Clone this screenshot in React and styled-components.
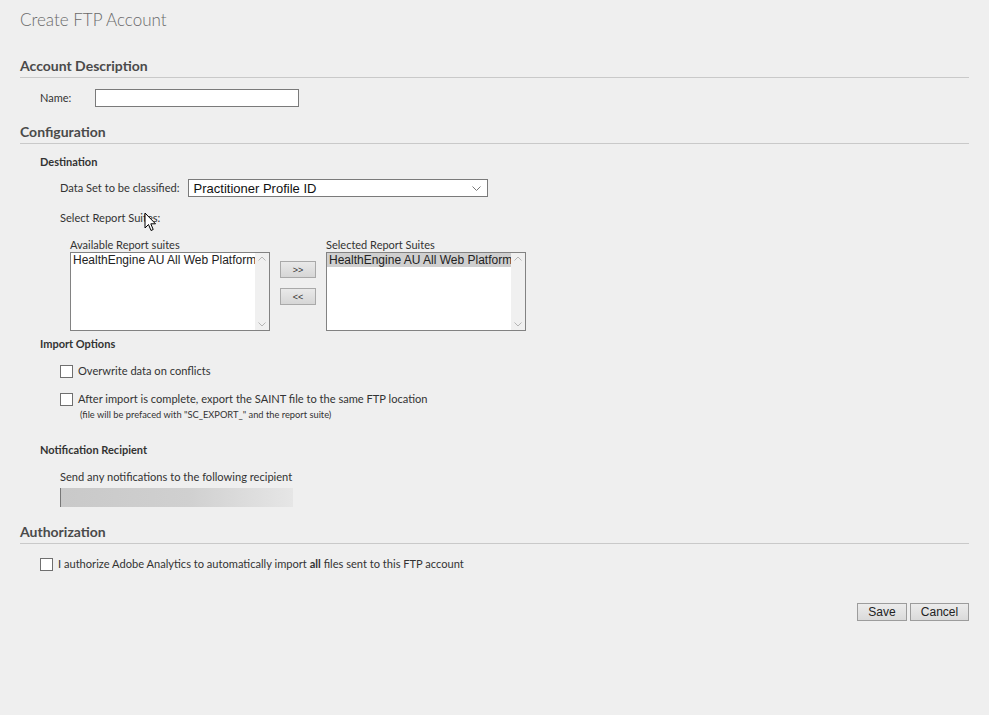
import React from 'react';
import styled, { createGlobalStyle } from 'styled-components';

const Global = createGlobalStyle`
  html, body {
    margin: 0;
    padding: 0;
    background: #efefef;
  }
  body {
    font-family: Lato, "Open Sans", sans-serif;
    color: #333;
  }
`;

const Page = styled.div`
  position: relative;
  width: 989px;
  height: 715px;
  padding: 10px 20px 0 20px;
  box-sizing: border-box;
`;

const Title = styled.h1`
  margin: 0;
  font-size: 17px;
  font-weight: 300;
  color: #6a6a6a;
  line-height: 20px;
`;

const SectionHead = styled.h2`
  margin: ${(p) => p.top}px 0 0 0;
  padding-bottom: 2px;
  font-size: 14px;
  font-weight: 700;
  color: #4a4a4a;
  line-height: 18px;
  border-bottom: 1px solid #c9c9c9;
`;

const SubHead = styled.h3`
  margin: ${(p) => p.top}px 0 0 20px;
  font-size: 11px;
  font-weight: 700;
  color: #333;
  line-height: 14px;
`;

const Row = styled.div`
  display: flex;
  align-items: center;
  gap: ${(p) => p.gap || 8}px;
  margin: ${(p) => p.top}px 0 0 ${(p) => p.left}px;
`;

const Label = styled.span`
  font-size: ${(p) => p.size || 11.1}px;
  color: #333;
  line-height: 16px;
`;

const TextInput = styled.div`
  width: 204px;
  height: 18px;
  box-sizing: border-box;
  background: #fff;
  border: 1px solid #7a7a7a;
`;

const Select = styled.div`
  display: flex;
  align-items: center;
  justify-content: space-between;
  width: 300px;
  height: 18px;
  box-sizing: border-box;
  background: #fff;
  border: 1px solid #7a7a7a;
  padding: 0 6px 0 5px;
  font-family: "Liberation Sans", Arial, sans-serif;
  font-size: 13px;
  color: #111;
`;

const Suites = styled.div`
  display: flex;
  align-items: flex-start;
  gap: 10px;
  margin: 12px 0 0 50px;
`;

const ListCol = styled.div`
  display: flex;
  flex-direction: column;
`;

const ListCaption = styled.span`
  font-size: 11px;
  color: #333;
  line-height: 14px;
`;

const ListBox = styled.div`
  display: flex;
  width: 200px;
  height: 79px;
  box-sizing: border-box;
  background: #fff;
  border: 1px solid #828282;
`;

const Options = styled.div`
  flex: 1;
  overflow: hidden;
`;

const Option = styled.div`
  padding-left: 2px;
  white-space: nowrap;
  font-family: "Liberation Sans", Arial, sans-serif;
  font-size: 12px;
  line-height: 14px;
  color: #222;
  background: ${(p) => (p.selected ? '#cfcfcf' : 'transparent')};
`;

const ScrollBar = styled.div`
  display: flex;
  flex-direction: column;
  justify-content: space-between;
  align-items: center;
  width: 14px;
  background: #f0f0f0;
  padding: 3px 0;
  box-sizing: border-box;
`;

const Movers = styled.div`
  display: flex;
  flex-direction: column;
  gap: 10px;
  padding-top: 23px;
`;

const SmallButton = styled.button`
  width: 36px;
  height: 17px;
  padding: 0;
  font-family: "Liberation Sans", Arial, sans-serif;
  font-size: 9px;
  color: #333;
  background: linear-gradient(#e9e9e9, #d6d6d6);
  border: 1px solid #a9a9a9;
`;

const Check = styled.span`
  display: inline-block;
  width: 13px;
  height: 13px;
  box-sizing: border-box;
  background: #fff;
  border: 1px solid #6f6f6f;
  flex: none;
`;

const Note = styled.div`
  margin: 2px 0 0 60px;
  font-size: 9.3px;
  color: #333;
  line-height: 12px;
`;

const Blurred = styled.div`
  width: 232px;
  height: 19px;
  margin: 3px 0 0 40px;
  border-left: 1px solid #777;
  background: linear-gradient(90deg, #c9c9c9 0%, #d0d0d0 55%, #e6e6e6 100%);
`;

const Footer = styled.div`
  display: flex;
  justify-content: flex-end;
  gap: 3px;
  margin-top: 31px;
`;

const FormButton = styled.button`
  width: ${(p) => p.width}px;
  height: 18px;
  padding: 0;
  font-family: "Liberation Sans", Arial, sans-serif;
  font-size: 12px;
  color: #222;
  background: linear-gradient(#ececec, #dadada);
  border: 1px solid #9c9c9c;
`;

const Cursor = styled.svg`
  position: absolute;
  left: 144px;
  top: 212px;
`;

const Chevron = ({ up }) => (
  <svg width="8" height="5" viewBox="0 0 8 5">
    <path d={up ? 'M0.5 4.5 L4 1 L7.5 4.5' : 'M0.5 0.5 L4 4 L7.5 0.5'} fill="none" stroke="#b5b5b5" strokeWidth="1" />
  </svg>
);

const List = ({ caption, selected }) => (
  <ListCol>
    <ListCaption>{caption}</ListCaption>
    <ListBox>
      <Options>
        <Option selected={selected}>HealthEngine AU All Web Platform</Option>
      </Options>
      <ScrollBar>
        <Chevron up />
        <Chevron />
      </ScrollBar>
    </ListBox>
  </ListCol>
);

export default function App() {
  return (
    <Page>
      <Global />
      <Title>Create FTP Account</Title>

      <SectionHead top={27}>Account Description</SectionHead>
      <Row top={11} left={20} gap={24}>
        <Label size={11}>Name:</Label>
        <TextInput />
      </Row>

      <SectionHead top={16}>Configuration</SectionHead>
      <SubHead top={11}>Destination</SubHead>
      <Row top={10} left={40} gap={8}>
        <Label>Data Set to be classified:</Label>
        <Select>
          <span>Practitioner Profile ID</span>
          <svg width="9" height="5" viewBox="0 0 9 5">
            <path d="M0.5 0.5 L4.5 4.5 L8.5 0.5" fill="none" stroke="#777" strokeWidth="1" />
          </svg>
        </Select>
      </Row>
      <Row top={13} left={40}>
        <Label>Select Report Suites:</Label>
      </Row>

      <Suites>
        <List caption="Available Report suites" />
        <Movers>
          <SmallButton>&gt;&gt;</SmallButton>
          <SmallButton>&lt;&lt;</SmallButton>
        </Movers>
        <List caption="Selected Report Suites" selected />
      </Suites>

      <SubHead top={6}>Import Options</SubHead>
      <Row top={12} left={40} gap={5}>
        <Check />
        <Label>Overwrite data on conflicts</Label>
      </Row>
      <Row top={12} left={40} gap={5}>
        <Check />
        <Label>After import is complete, export the SAINT file to the same FTP location</Label>
      </Row>
      <Note>(file will be prefaced with "SC_EXPORT_" and the report suite)</Note>

      <SubHead top={22}>Notification Recipient</SubHead>
      <Row top={12} left={40}>
        <Label>Send any notifications to the following recipient</Label>
      </Row>
      <Blurred />

      <SectionHead top={16}>Authorization</SectionHead>
      <Row top={12} left={20} gap={5}>
        <Check />
        <Label>
          I authorize Adobe Analytics to automatically import <b>all</b> files sent to this FTP account
        </Label>
      </Row>

      <Footer>
        <FormButton width={50}>Save</FormButton>
        <FormButton width={59}>Cancel</FormButton>
      </Footer>

      <Cursor width="13" height="20" viewBox="0 0 13 20">
        <path d="M1 1 L1 16 L4.5 12.5 L7 18.5 L9.2 17.5 L6.8 11.8 L11.5 11.8 Z" fill="#fff" stroke="#000" strokeWidth="1" />
      </Cursor>
    </Page>
  );
}
